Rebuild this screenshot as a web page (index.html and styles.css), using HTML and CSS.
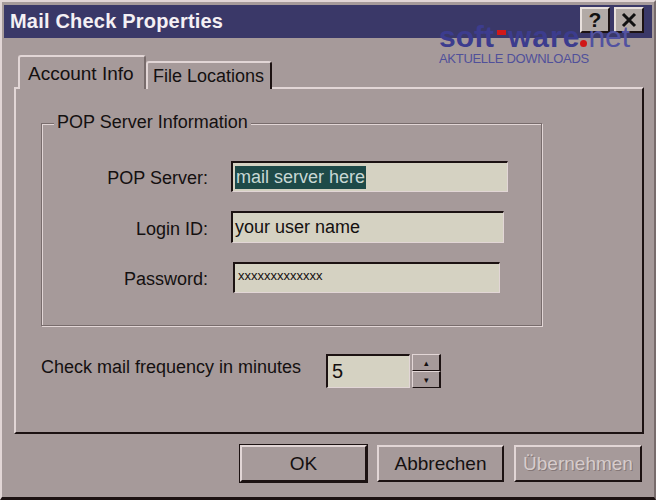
FILE: index.html
```html
<!DOCTYPE html>
<html lang="de">
<head>
    <meta charset="UTF-8">
    <title>Mail Check Properties</title>
    <link rel="stylesheet" href="styles.css">
</head>
<body>
    <div class="window">
        <div class="titlebar">
            <span class="title">Mail Check Properties</span>
            <div class="title-buttons">
                <span class="tbtn">?</span>
                <span class="tbtn">
                    <svg width="18" height="16" viewBox="0 0 18 16"><path d="M3 2 L15 14 M15 2 L3 14" stroke="#111" stroke-width="3"/></svg>
                </span>
            </div>
        </div>

        <!-- Wasserzeichen -->
        <div class="watermark">
            <div class="wm-logo"><b>soft</b><i class="dash"></i><b class="ware">ware</b><i class="dot"></i><span>net</span></div>
            <div class="wm-sub">AKTUELLE DOWNLOADS</div>
        </div>

        <div class="content">
            <div class="tabs">
                <div class="tab active">Account Info</div>
                <div class="tab">File Locations</div>
            </div>

            <div class="panel">
                <div class="group">
                    <span class="legend">POP Server Information</span>
                    <div class="row">
                        <label>POP Server:</label>
                        <div class="field f1"><span class="selected">mail server here</span></div>
                    </div>
                    <div class="row">
                        <label>Login ID:</label>
                        <div class="field f2">your user name</div>
                    </div>
                    <div class="row">
                        <label>Password:</label>
                        <div class="field f3 pw">xxxxxxxxxxxxx</div>
                    </div>
                </div>

                <div class="freq">
                    <span>Check mail frequency in minutes</span>
                    <div class="spin">
                        <div class="field num">5</div>
                        <div class="spin-btns">
                            <span class="sbtn">&#9652;</span>
                            <span class="sbtn">&#9662;</span>
                        </div>
                    </div>
                </div>
            </div>

            <div class="buttons">
                <span class="btn default">OK</span>
                <span class="btn">Abbrechen</span>
                <span class="btn disabled">Übernehmen</span>
            </div>
        </div>
    </div>
</body>
</html>
```

FILE: styles.css
```css
:root {
    --face: #a69a9a;
    --light: #e2d6d6;
    --shadow: #786c6c;
    --dark: #1c1212;
    --title: #3a3868;
    --input: #d5d2c2;
}

body {
    margin: 0;
    background: var(--face);
    font-family: 'Liberation Sans', Arial, sans-serif;
    color: #141010;
}

.window {
    position: relative;
    width: 656px;
    height: 500px;
    box-sizing: border-box;
    border-top: 2px solid var(--light);
    border-left: 2px solid var(--light);
    border-right: 2px solid var(--shadow);
    border-bottom: 3px solid var(--dark);
    padding: 3px 2px 0 2px;
    background: var(--face);
}

/* Titelleiste */
.titlebar {
    height: 33px;
    background: var(--title);
    display: flex;
    align-items: center;
    justify-content: space-between;
    padding: 0 8px 0 6px;
}

.title {
    color: #f4f0f4;
    font-weight: bold;
    font-size: 20px;
    letter-spacing: 0.2px;
}

.title-buttons {
    display: flex;
    gap: 4px;
    align-self: flex-start;
    padding-top: 2px;
}

.tbtn {
    width: 30px;
    height: 26px;
    box-sizing: border-box;
    background: #b2aaa6;
    border-top: 2px solid #e8e0dc;
    border-left: 2px solid #e8e0dc;
    border-right: 2px solid var(--dark);
    border-bottom: 2px solid var(--dark);
    display: flex;
    align-items: center;
    justify-content: center;
    font-weight: bold;
    font-size: 21px;
    line-height: 20px;
    color: #111;
}

/* Wasserzeichen liegt über dem Dialog */
.watermark {
    position: absolute;
    left: 437px;
    top: 31px;
    color: #3c3c8e;
    pointer-events: none;
}

.wm-logo {
    display: flex;
    align-items: baseline;
    font-size: 30px;
    line-height: 8px;
    height: 14px;
}

.wm-logo b {
    font-weight: bold;
}

.wm-logo .ware {
    letter-spacing: 1px;
}

.wm-logo span {
    font-weight: normal;
    color: #5252a0;
}

.dash {
    display: inline-block;
    width: 9px;
    height: 5px;
    background: #d01818;
    margin: 0 2px 0 3px;
    transform: translateY(-12px);
}

.dot {
    display: inline-block;
    width: 7px;
    height: 7px;
    border-radius: 50%;
    background: #d01818;
    margin: 0 1px 0 0;
}

.wm-sub {
    font-size: 13px;
    letter-spacing: -0.3px;
    color: #50509a;
    margin-top: 4px;
}

.content {
    padding: 14px 8px 0 10px;
}

/* Reiter */
.tabs {
    display: flex;
    align-items: flex-end;
    padding-left: 4px;
    height: 35px;
    position: relative;
    z-index: 1;
}

.tab {
    font-size: 18px;
    height: 28px;
    box-sizing: border-box;
    padding: 3px 0 0 5px;
    border-top: 2px solid var(--light);
    border-left: 2px solid var(--light);
    border-right: 2px solid var(--dark);
    border-radius: 3px 3px 0 0;
    background: var(--face);
    width: 126px;
    margin-bottom: -2px;
}

.tab.active {
    height: 34px;
    width: 128px;
    font-size: 19px;
    padding: 6px 0 0 8px;
    border-right: 2px solid var(--shadow);
}

/* Registerfläche */
.panel {
    height: 347px;
    box-sizing: border-box;
    border-top: 2px solid var(--light);
    border-left: 2px solid var(--light);
    border-right: 2px solid var(--dark);
    border-bottom: 2px solid var(--dark);
    padding: 34px 0 0 25px;
}

.group {
    position: relative;
    width: 501px;
    height: 203px;
    box-sizing: border-box;
    border: 1px solid var(--shadow);
    box-shadow: inset 1px 1px 0 var(--light), 1px 1px 0 var(--light);
    padding: 37px 0 0 0;
    display: flex;
    flex-direction: column;
    gap: 19px;
}

.legend {
    position: absolute;
    left: 12px;
    top: -12px;
    background: var(--face);
    padding: 0 3px;
    font-size: 18px;
}

.row {
    display: flex;
    align-items: center;
    gap: 23px;
}

.row label {
    width: 166px;
    text-align: right;
    font-size: 18px;
    padding-top: 4px;
}

.field {
    height: 31px;
    box-sizing: border-box;
    background: var(--input);
    border-top: 2px solid var(--dark);
    border-left: 2px solid var(--dark);
    border-right: 1px solid var(--light);
    border-bottom: 1px solid var(--light);
    font-size: 18px;
    display: flex;
    align-items: center;
    padding-left: 2px;
}

.f1 { width: 277px; }
.f2 { width: 273px; height: 32px; }
.f3 { width: 267px; margin-left: 2px; }

.pw {
    font-size: 13px;
    padding-left: 3px;
    align-items: flex-start;
    padding-top: 4px;
}

.selected {
    background: #1e4a48;
    color: #c8d8d4;
    padding: 1px 1px;
}

/* Intervall */
.freq {
    display: flex;
    align-items: center;
    margin-top: 28px;
    font-size: 18px;
}

.freq > span {
    width: 285px;
    margin-top: -8px;
}

.spin {
    display: flex;
    gap: 2px;
}

.num {
    width: 84px;
    height: 34px;
    font-size: 20px;
    padding-left: 4px;
}

.spin-btns {
    display: flex;
    flex-direction: column;
    width: 29px;
}

.sbtn {
    height: 17px;
    box-sizing: border-box;
    border-top: 1px solid var(--light);
    border-left: 1px solid var(--light);
    border-right: 2px solid var(--dark);
    border-bottom: 1px solid var(--dark);
    font-size: 9px;
    display: flex;
    align-items: center;
    justify-content: center;
}

/* Schaltflächen */
.buttons {
    display: flex;
    justify-content: flex-end;
    gap: 10px;
    padding: 11px 2px 0 0;
}

.btn {
    width: 127px;
    height: 37px;
    box-sizing: border-box;
    border-top: 2px solid var(--light);
    border-left: 2px solid var(--light);
    border-right: 2px solid var(--dark);
    border-bottom: 2px solid var(--dark);
    display: flex;
    align-items: center;
    justify-content: center;
    font-size: 19px;
}

.btn.default {
    outline: 1px solid var(--dark);
}

.btn.disabled {
    width: 128px;
    color: #d6cccc;
    text-shadow: 1px 1px 0 #857878;
}
```
